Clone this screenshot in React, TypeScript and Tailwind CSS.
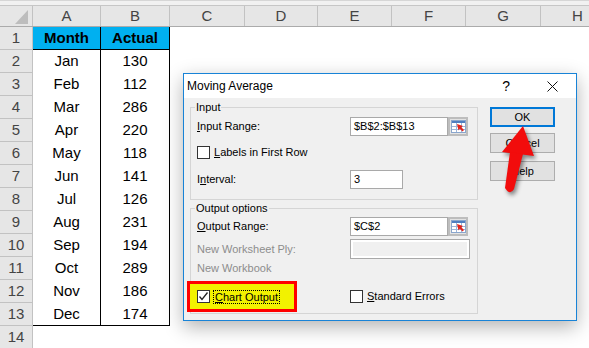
const columns = [
  { label: "A", w: "w-[68px]" },
  { label: "B", w: "w-[69px]" },
  { label: "C", w: "w-[75px]" },
  { label: "D", w: "w-[73px]" },
  { label: "E", w: "w-[74px]" },
  { label: "F", w: "w-[74px]" },
  { label: "G", w: "w-[75px]" },
  { label: "H", w: "w-[74px]" },
];

const rows: [string, number][] = [
  ["Jan", 130],
  ["Feb", 112],
  ["Mar", 286],
  ["Apr", 220],
  ["May", 118],
  ["Jun", 141],
  ["Jul", 126],
  ["Aug", 231],
  ["Sep", 194],
  ["Oct", 289],
  ["Nov", 186],
  ["Dec", 174],
];

function RowNum({ n }: { n: number }) {
  return (
    <div className="w-[33px] shrink-0 h-full bg-[#e6e6e6] border-r border-b border-[#c2c2c2] flex items-center justify-center text-[#444]">
      {n}
    </div>
  );
}

function CheckBox({ checked }: { checked?: boolean }) {
  return (
    <div className="w-[13px] h-[13px] shrink-0 border border-[#333] bg-white flex items-center justify-center">
      {checked && (
        <svg width="11" height="11" viewBox="0 0 11 11">
          <path d="M1.5 5.5 L4 8.5 L9.5 1.5" fill="none" stroke="#222" strokeWidth="1.3" />
        </svg>
      )}
    </div>
  );
}

function RefButton() {
  return (
    <div className="w-[20px] h-[19px] shrink-0 bg-[#e3e3e3] border-2 border-[#bdbdbd] flex items-center justify-center">
      <svg width="15" height="13" viewBox="0 0 15 13">
        <rect x="0.5" y="0.5" width="14" height="12" fill="#fff" stroke="#8aa6cc" />
        <rect x="1" y="1" width="13" height="2" fill="#4f7fc0" />
        <path d="M1 6.5 H14 M1 9.5 H14 M5.5 3 V12 M10.5 3 V12" stroke="#9db5d8" strokeWidth="1" />
        <path d="M6 4 L12 6 L10.3 7.2 L13 10 L11.5 11.5 L8.8 8.7 L7.5 10.5 Z" fill="#e2231a" />
      </svg>
    </div>
  );
}

function TextBox({ value, w }: { value: string; w: string }) {
  return (
    <div className={`${w} h-[19px] shrink-0 border border-[#a9a9a9] bg-white pl-[3px] flex items-center`}>
      {value}
    </div>
  );
}

function MovingAverageDialog() {
  return (
    <div className="absolute left-[183px] top-[73px] w-[394px] h-[248px] border border-[#1883d7] bg-[#f0f0f0] shadow-[0_6px_18px_rgba(0,0,0,0.3)] text-[11px] leading-[13px] text-black">
      <div className="h-[24px] bg-white flex items-center pl-[3px] pr-[18px] text-[12px]">
        <span>Moving Average</span>
        <span className="ml-auto text-[14px]">?</span>
        <svg className="ml-[37px]" width="11" height="11" viewBox="0 0 11 11">
          <path d="M0.5 0.5 L10.5 10.5 M10.5 0.5 L0.5 10.5" stroke="#111" strokeWidth="1" />
        </svg>
      </div>

      <div className="flex pl-[6px] pt-[3px]">
        <div className="w-[287px] shrink-0">
          <fieldset className="border border-[#d5d5d5] pl-[6px] pr-[9px] pb-[10px]">
            <legend className="-ml-[2px] px-[1px]">Input</legend>
            <div className="mt-[3px] h-[19px] flex items-center">
              <span className="w-[153px] shrink-0">
                <u>I</u>nput Range:
              </span>
              <TextBox value="$B$2:$B$13" w="w-[98px]" />
              <RefButton />
            </div>
            <div className="mt-[10px] h-[13px] flex items-center">
              <CheckBox />
              <span className="ml-[4px]">
                <u>L</u>abels in First Row
              </span>
            </div>
            <div className="mt-[11px] h-[19px] flex items-center">
              <span className="w-[153px] shrink-0">
                I<u>n</u>terval:
              </span>
              <TextBox value="3" w="w-[53px]" />
            </div>
          </fieldset>

          <fieldset className="mt-[2px] border border-[#d5d5d5] pl-[6px] pr-[7px] pb-[10px]">
            <legend className="-ml-[2px] px-[1px]">Output options</legend>
            <div className="mt-[2px] h-[19px] flex items-center">
              <span className="w-[153px] shrink-0">
                <u>O</u>utput Range:
              </span>
              <TextBox value="$C$2" w="w-[98px]" />
              <RefButton />
            </div>
            <div className="mt-[3px] h-[20px] flex items-center text-[#8d8d8d]">
              <span className="w-[153px] shrink-0">New Worksheet Ply:</span>
              <div className="w-[120px] h-[20px] border border-[#a9a9a9] bg-white p-[2px]">
                <div className="w-full h-full bg-[#f0f0f0]" />
              </div>
            </div>
            <div className="mt-[3px] h-[13px] flex items-center text-[#8d8d8d]">New Workbook</div>
            <div className="mt-[15px] h-[13px] flex items-center">
              <div className="w-[153px] shrink-0 flex items-center">
                <div className="-ml-[10px] w-[110px] h-[31px] shrink-0 border-[3px] border-[#ff0000] bg-[#f2f200] pl-[7px] flex items-center">
                  <CheckBox checked />
                  <span className="ml-[3px] px-[1px] border border-dotted border-black leading-[12px]">
                    <u>C</u>hart Output
                  </span>
                </div>
              </div>
              <CheckBox />
              <span className="ml-[4px]">
                <u>S</u>tandard Errors
              </span>
            </div>
          </fieldset>
        </div>

        <div className="ml-[13px] mt-[6px] w-[65px] flex flex-col">
          <div className="h-[20px] border-2 border-[#0078d7] bg-[#e1e1e1] flex items-center justify-center">OK</div>
          <div className="mt-[6px] h-[20px] border border-[#adadad] bg-[#e1e1e1] flex items-center justify-center">Cancel</div>
          <div className="mt-[8px] h-[20px] border border-[#adadad] bg-[#e1e1e1] flex items-center justify-center">Help</div>
        </div>
      </div>
    </div>
  );
}

export default function App() {
  return (
    <div className="relative w-[589px] h-[348px] overflow-hidden bg-white font-['Liberation_Sans',Arial,sans-serif] text-[15px] text-black">
      <div className="h-[6px] bg-[#f1f1f1] border-t border-t-[#d6d6d6] border-b border-b-[#c6c6c6]" />
      <div className="flex h-[21px] bg-[#e6e6e6] border-b border-[#ababab] text-[#444]">
        <div className="w-[33px] shrink-0 border-r border-[#c2c2c2] flex items-end justify-end pr-[4px] pb-[2px]">
          <svg width="13" height="14" viewBox="0 0 13 14">
            <path d="M13 0 L13 14 L0 14 Z" fill="#bdbdbd" />
          </svg>
        </div>
        {columns.map((c) => (
          <div key={c.label} className={`${c.w} shrink-0 border-r border-[#c2c2c2] flex items-center justify-center`}>
            {c.label}
          </div>
        ))}
      </div>

      <div className="flex h-[23px]">
        <RowNum n={1} />
        <div className="w-[68px] shrink-0 bg-[#00b0f0] border-r border-b border-black font-bold flex items-center justify-center">
          Month
        </div>
        <div className="w-[69px] shrink-0 bg-[#00b0f0] border-r border-b border-black font-bold flex items-center justify-center">
          Actual
        </div>
      </div>
      {rows.map(([m, v], i) => (
        <div key={m} className="flex h-[23px]">
          <RowNum n={i + 2} />
          <div className={`w-[68px] shrink-0 border-r border-black flex items-center justify-center ${i === rows.length - 1 ? "border-b" : ""}`}>
            {m}
          </div>
          <div className={`w-[69px] shrink-0 border-r border-black flex items-center justify-center ${i === rows.length - 1 ? "border-b" : ""}`}>
            {v}
          </div>
        </div>
      ))}
      <div className="flex h-[23px]">
        <RowNum n={14} />
      </div>

      <MovingAverageDialog />

      <svg
        className="absolute left-0 top-0 pointer-events-none drop-shadow-[2px_3px_2px_rgba(0,0,0,0.45)]"
        width="589"
        height="348"
        viewBox="0 0 589 348"
      >
        <path d="M523 126 L502 152 L534 156 Z" fill="#f20c0c" />
        <path d="M510 152 L523 154 L514 189 Q510 196 505 188 Z" fill="#f20c0c" />
      </svg>
    </div>
  );
}
